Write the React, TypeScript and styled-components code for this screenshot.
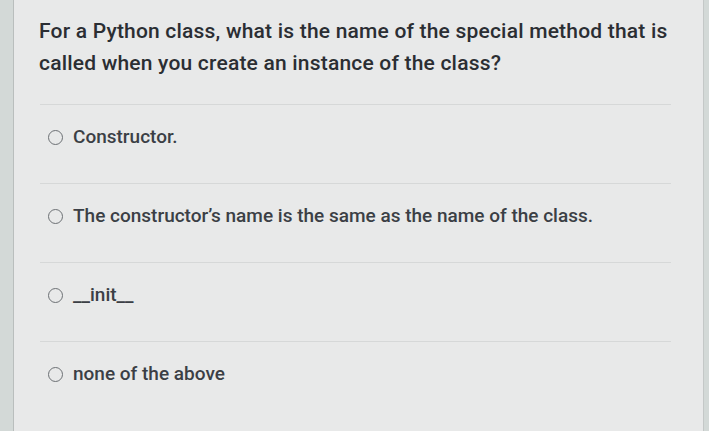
import styled, { createGlobalStyle } from 'styled-components';

const options = [
  'Constructor.',
  'The constructor\u2019s name is the same as the name of the class.',
  '__init__',
  'none of the above',
];

const GlobalStyle = createGlobalStyle`
  html, body {
    margin: 0;
    padding: 0;
    height: 100%;
    background: #d3d9d7;
  }
  #root {
    height: 100%;
  }
`;

export default function App() {
  return (
    <>
      <GlobalStyle />
      <Page>
        <Card>
          <Question>
            For a Python class, what is the name of the special method that is called when you
            create an instance of the class?
          </Question>
          <OptionList>
            {options.map((opt) => (
              <Option key={opt}>
                <Radio />
                <OptionLabel>{opt}</OptionLabel>
              </Option>
            ))}
          </OptionList>
        </Card>
      </Page>
    </>
  );
}

const Page = styled.div`
  height: 100%;
  padding-left: 13px;
  box-sizing: border-box;
  display: flex;
`;

const Card = styled.div`
  width: 691px;
  height: 100%;
  box-sizing: border-box;
  background: #e8e9e9;
  border-left: 1px solid #b9bebd;
  border-right: 1px solid #c4c8c7;
  padding: 15px 32px 0 25px;
  display: flex;
  flex-direction: column;
`;

const Question = styled.p`
  margin: 0;
  font-family: Roboto, 'Noto Sans', sans-serif;
  font-size: 21px;
  font-weight: 500;
  letter-spacing: 0.2px;
  line-height: 32px;
  color: #2b2e33;
  width: 650px;
`;

const OptionList = styled.div`
  margin-top: 25px;
  margin-left: 1px;
  display: flex;
  flex-direction: column;
`;

const Option = styled.label`
  display: flex;
  align-items: center;
  gap: 10px;
  padding: 20px 0 34px 8px;
  border-top: 1px solid #d6d8d8;
`;

const Radio = styled.span`
  width: 15px;
  height: 15px;
  box-sizing: border-box;
  border: 1.5px solid #6c7074;
  border-radius: 50%;
  flex-shrink: 0;
`;

const OptionLabel = styled.span`
  font-family: Roboto, 'Noto Sans', sans-serif;
  font-size: 19px;
  font-weight: 500;
  line-height: 24px;
  color: #3b3f45;
`;
